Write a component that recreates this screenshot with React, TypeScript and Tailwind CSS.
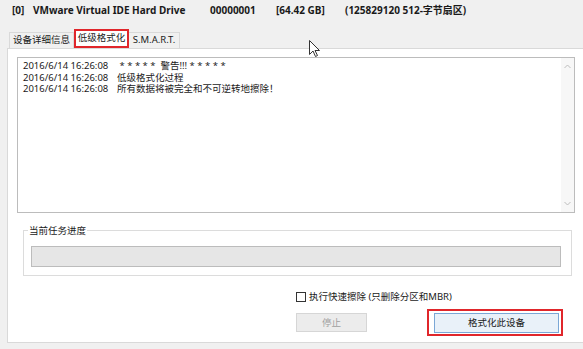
import React from "react";

const font = { fontFamily: '"Noto Sans", "Noto Sans CJK SC", sans-serif' };

const logs = [
  { time: "2016/6/14 16:26:08", msg: " * * * * *  警告!!! * * * * *" },
  { time: "2016/6/14 16:26:08", msg: "低级格式化过程" },
  { time: "2016/6/14 16:26:08", msg: "所有数据将被完全和不可逆转地擦除！" },
];

function Cursor() {
  return (
    <svg className="absolute left-[309px] top-[40px]" width="12" height="18" viewBox="0 0 12 18">
      <path d="M0.5 0.5 L0.5 14.5 L4 11 L6.5 16.5 L8.5 15.5 L6 10.5 L10.5 10.5 Z" fill="#fff" stroke="#333" strokeWidth="1" />
    </svg>
  );
}

export default function App() {
  return (
    <div className="relative flex h-[349px] w-[583px] flex-col overflow-hidden bg-[#f0f0f0] text-[9.5px] text-[#1a1a1a]" style={font}>
      {/* 磁盘信息 */}
      <div className="flex h-[29px] items-start pl-[12px] pt-[3px] text-[10px] font-bold">
        <span className="w-[21px]">[0]</span>
        <span className="w-[177px]">VMware Virtual IDE Hard Drive</span>
        <span className="w-[66px]">00000001</span>
        <span className="w-[69px]">[64.42 GB]</span>
        <span>(125829120 512-字节扇区)</span>
      </div>

      {/* 标签页 */}
      <div className="flex h-[19px] items-end pl-[9px]">
        <div className="flex h-[16px] w-[65px] items-center justify-center border border-b-0 border-[#d9d9d9] bg-[#f0f0f0]">设备详细信息</div>
        <div className="flex h-[19px] w-[55px] items-center justify-center border-2 border-[#e0262b] bg-white">低级格式化</div>
        <div className="flex h-[16px] w-[51px] items-center justify-center border border-b-0 border-l-0 border-[#d9d9d9] bg-[#f0f0f0]">S.M.A.R.T.</div>
      </div>

      {/* 面板 */}
      <div className="ml-[7px] flex h-[295px] flex-col border border-r-0 border-[#d9d9d9] bg-white">
        <div className="ml-[9px] mt-[8px] flex h-[156px] w-[558px] border border-[#bcbcbc] bg-white">
          <div className="flex flex-1 flex-col pl-[5px] pt-[2px] leading-[11.7px]">
            {logs.map((l, i) => (
              <div key={i} className="flex whitespace-pre">
                <span className="w-[94px]">{l.time}</span>
                <span>{l.msg}</span>
              </div>
            ))}
          </div>
          <div className="flex w-[13px] flex-col items-center justify-between bg-[#f7f7f7] py-[6px]">
            <svg width="7" height="5" viewBox="0 0 7 5">
              <path d="M0.5 4 L3.5 1 L6.5 4" fill="none" stroke="#bdbdbd" strokeWidth="1" />
            </svg>
            <svg width="7" height="5" viewBox="0 0 7 5">
              <path d="M0.5 1 L3.5 4 L6.5 1" fill="none" stroke="#bdbdbd" strokeWidth="1" />
            </svg>
          </div>
        </div>

        {/* 当前任务进度 */}
        <div className="relative ml-[15px] mt-[17px] h-[46px] w-[549px] border border-[#dcdcdc] px-[7px] pt-[15px]">
          <span className="absolute left-[4px] top-[-6px] bg-white px-[1px] leading-[12px]">当前任务进度</span>
          <div className="h-[21px] w-[530px] border border-[#bcbcbc] bg-[#e6e6e6]" />
        </div>

        {/* 选项与按钮 */}
        <div className="ml-[288px] mt-[14px] flex items-center gap-[3px]">
          <div className="h-[10px] w-[10px] border border-[#333] bg-white" />
          <span>执行快速擦除 (只删除分区和MBR)</span>
        </div>
        <div className="ml-[288px] mt-[5px] flex items-start">
          <div className="mt-[4px] flex h-[19px] w-[71px] items-center justify-center border border-[#d6d6d6] bg-[#ececec] text-[#a0a0a0]">停止</div>
          <div className="ml-[60px] flex h-[27px] w-[136px] border-2 border-[#e0262b] pb-[1px] pl-[5px] pr-[2px] pt-[2px]">
            <div className="flex flex-1 items-center justify-center border border-[#7aa7d6] bg-[#e9f1f9]">格式化此设备</div>
          </div>
        </div>
      </div>

      <Cursor />
    </div>
  );
}
